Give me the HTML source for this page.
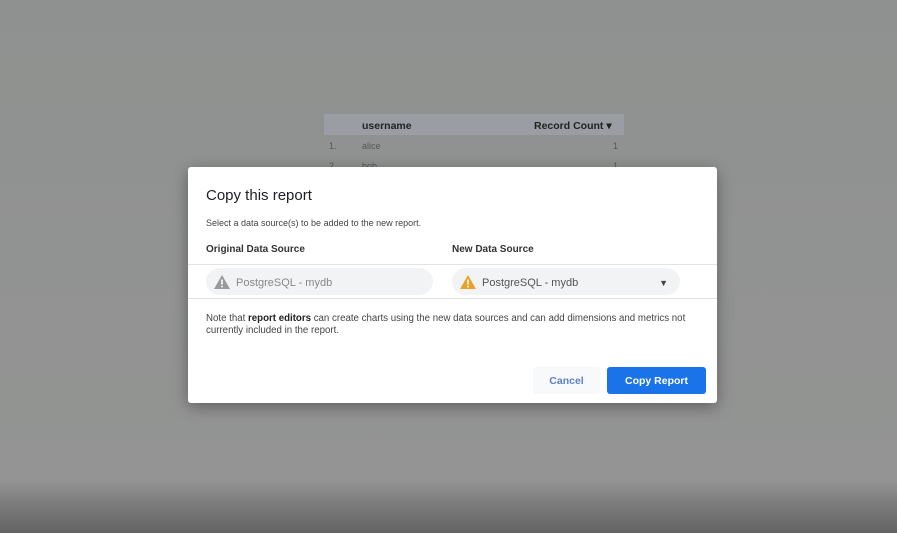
<!DOCTYPE html>
<html><head><meta charset="utf-8"><style>
*{margin:0;padding:0;box-sizing:border-box}
body{width:897px;height:533px;overflow:hidden;position:relative;font-family:"Liberation Sans",Arial,sans-serif;background:linear-gradient(#8f9190 0,#939493 480px,#7a7b7a 505px,#626362 533px)}
.th{position:absolute;left:324px;top:114px;width:300px;height:21px;background:#9a9da4}
.t{position:absolute;font-size:10.5px;color:#333}
.dlg{position:absolute;left:188px;top:167px;width:529px;height:236px;background:#fff;border-radius:3px;box-shadow:0 4px 16px rgba(0,0,0,.35)}
.h{position:absolute;left:18px;top:20px;font-size:15px;color:#202124}
.s{position:absolute;left:18px;top:51px;font-size:9px;color:#444}
.l{position:absolute;top:77px;font-size:10px;font-weight:bold;color:#333}
.line{position:absolute;left:0;width:529px;height:1px;background:#e2e2e2}
.pill{position:absolute;top:101px;height:27px;border-radius:14px;background:#f1f3f4;font-size:11px;color:#777;padding-left:30px;line-height:30px}
.pill svg{position:absolute;left:8px;top:7px}
.n{position:absolute;left:18px;top:146px;width:492px;font-size:9.7px;line-height:12px;color:#444}
.btn{position:absolute;top:200px;height:27px;border-radius:3px;font-size:10.5px;font-weight:bold;line-height:29px;text-align:center}
</style></head><body>
<div class="th"></div>
<div class="t" style="left:362px;top:120px;font-weight:bold;color:#222">username</div>
<div class="t" style="left:534px;top:120px;font-weight:bold;color:#222">Record Count ▾</div>
<div class="t" style="left:329px;top:141px;font-size:9px;color:#555">1.</div>
<div class="t" style="left:362px;top:141px;font-size:9px;color:#555">alice</div>
<div class="t" style="left:613px;top:141px;font-size:9px;color:#555">1</div>
<div class="t" style="left:329px;top:161px;font-size:9px;color:#555">2.</div>
<div class="t" style="left:362px;top:161px;font-size:9px;color:#555">bob</div>
<div class="t" style="left:613px;top:161px;font-size:9px;color:#555">1</div>
<div class="dlg">
<div class="h">Copy this report</div>
<div class="s">Select a data source(s) to be added to the new report.</div>
<div class="l" style="left:18px">Original Data Source</div>
<div class="l" style="left:264px">New Data Source</div>
<div class="line" style="top:97px"></div>
<div class="line" style="top:131px"></div>
<div class="pill" style="left:18px;width:227px;color:#888"><svg width="16" height="14" viewBox="0 0 16 14"><path d="M8 0L16 14H0Z" fill="#9a9a9a"/><rect x="7.2" y="4.5" width="1.6" height="5" fill="#fff"/><rect x="7.2" y="10.8" width="1.6" height="1.6" fill="#fff"/></svg>PostgreSQL - mydb</div>
<div class="pill" style="left:264px;width:228px;color:#555"><svg width="16" height="14" viewBox="0 0 16 14"><path d="M8 0L16 14H0Z" fill="#e8a22c"/><rect x="7.2" y="4.5" width="1.6" height="5" fill="#fff"/><rect x="7.2" y="10.8" width="1.6" height="1.6" fill="#fff"/></svg>PostgreSQL - mydb<span style="position:absolute;right:12px;top:0;font-size:9px;color:#444">▼</span></div>
<div class="n">Note that <b style="color:#222">report editors</b> can create charts using the new data sources and can add dimensions and metrics not currently included in the report.</div>
<div class="btn" style="left:345px;width:67px;color:#5b7fc9;background:#f8f9fa">Cancel</div>
<div class="btn" style="left:419px;width:99px;color:#fff;background:#1a73e8">Copy Report</div>
</div>
</body></html>
